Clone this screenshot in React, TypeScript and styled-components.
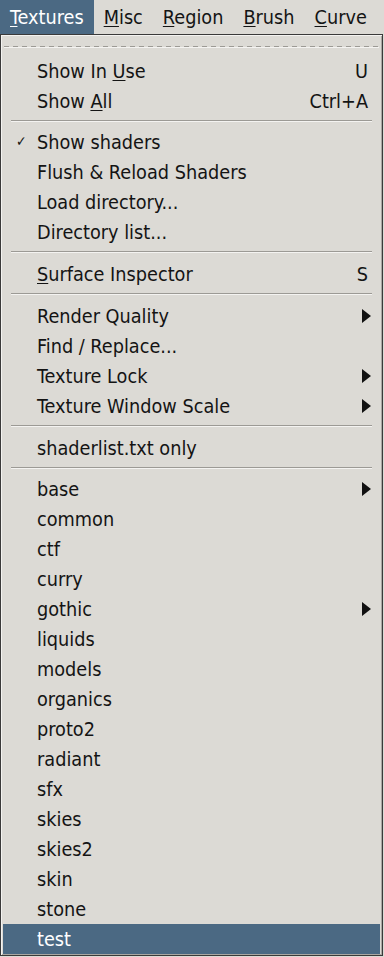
import React from 'react';
import styled, { createGlobalStyle } from 'styled-components';

const GlobalStyle = createGlobalStyle`
  html, body {
    margin: 0;
    padding: 0;
    background: #dcdad5;
  }
  body {
    font-family: "DejaVu Sans Condensed", "DejaVu Sans", sans-serif;
    font-stretch: condensed;
    font-size: 19.7px;
    color: #141414;
  }
`;

const Screen = styled.div`
  width: 384px;
  height: 957px;
  overflow: hidden;
  background: #dcdad5;
`;

const MenuBar = styled.div`
  display: flex;
  height: 34px;
  overflow: hidden;
`;

const BarItem = styled.div<{ active?: boolean }>`
  display: flex;
  align-items: center;
  padding: 0 10px;
  background: ${p => (p.active ? '#4b6983' : 'transparent')};
  color: ${p => (p.active ? '#ffffff' : '#141414')};
  white-space: nowrap;
`;

const Mnemonic = styled.span`
  text-decoration: underline;
  text-underline-offset: 2px;
`;

const Menu = styled.div`
  width: 377px;
  border: 1px solid #3a3a3a;
  box-shadow: inset 1px 1px 0 #f4f3f1, inset -1px -1px 0 #a9a7a2;
  background: #dcdad5;
  padding: 1px 2px;
`;

const TearOff = styled.div`
  height: 20px;
  display: flex;
  align-items: center;
  padding: 0 1px;
`;

const Dashes = styled.div`
  flex: 1;
  height: 1px;
  background: repeating-linear-gradient(
    to right,
    #9c9a95 0 5px,
    transparent 5px 9px
  );
  box-shadow: 0 1px 0 #f4f3f1;
`;

const Item = styled.div<{ selected?: boolean }>`
  display: flex;
  align-items: center;
  height: 30px;
  padding: 0 10px 0 34px;
  position: relative;
  background: ${p => (p.selected ? '#4b6983' : 'transparent')};
  color: ${p => (p.selected ? '#ffffff' : '#141414')};
  white-space: nowrap;
`;

const Label = styled.span`
  flex: 1;
`;

const Accel = styled.span`
  margin-right: 2px;
`;

const Check = styled.span`
  position: absolute;
  left: 13px;
  top: 6px;
  font-size: 14px;
`;

const Arrow = styled.span`
  width: 0;
  height: 0;
  border-top: 7px solid transparent;
  border-bottom: 7px solid transparent;
  border-left: 9px solid #111;
  margin-right: -1px;
`;

const Separator = styled.div<{ tight?: boolean }>`
  height: ${p => (p.tight ? 11 : 12)}px;
  box-sizing: border-box;
  padding: 4px 8px 0;
  &::after {
    content: '';
    display: block;
    height: 1px;
    background: #9c9a95;
    box-shadow: 0 1px 0 #f4f3f1;
  }
`;

type Entry =
  | { sep: true; tight?: boolean }
  | {
      label: React.ReactNode;
      accel?: string;
      sub?: boolean;
      check?: boolean;
      selected?: boolean;
    };

const entries: Entry[] = [
  { label: <>Show In <Mnemonic>U</Mnemonic>se</>, accel: 'U' },
  { label: <>Show <Mnemonic>A</Mnemonic>ll</>, accel: 'Ctrl+A' },
  { sep: true, tight: true },
  { label: 'Show shaders', check: true },
  { label: 'Flush & Reload Shaders' },
  { label: 'Load directory...' },
  { label: 'Directory list...' },
  { sep: true },
  { label: <><Mnemonic>S</Mnemonic>urface Inspector</>, accel: 'S' },
  { sep: true },
  { label: 'Render Quality', sub: true },
  { label: 'Find / Replace...' },
  { label: 'Texture Lock', sub: true },
  { label: 'Texture Window Scale', sub: true },
  { sep: true },
  { label: 'shaderlist.txt only' },
  { sep: true, tight: true },
  { label: 'base', sub: true },
  { label: 'common' },
  { label: 'ctf' },
  { label: 'curry' },
  { label: 'gothic', sub: true },
  { label: 'liquids' },
  { label: 'models' },
  { label: 'organics' },
  { label: 'proto2' },
  { label: 'radiant' },
  { label: 'sfx' },
  { label: 'skies' },
  { label: 'skies2' },
  { label: 'skin' },
  { label: 'stone' },
  { label: 'test', selected: true },
];

export default function App() {
  return (
    <Screen>
      <GlobalStyle />
      <MenuBar>
        <BarItem active><span><Mnemonic>T</Mnemonic>extures</span></BarItem>
        <BarItem><span><Mnemonic>M</Mnemonic>isc</span></BarItem>
        <BarItem><span><Mnemonic>R</Mnemonic>egion</span></BarItem>
        <BarItem><span><Mnemonic>B</Mnemonic>rush</span></BarItem>
        <BarItem><span><Mnemonic>C</Mnemonic>urve</span></BarItem>
        <BarItem><span><Mnemonic>P</Mnemonic>lugins</span></BarItem>
      </MenuBar>
      <Menu>
        <TearOff><Dashes /></TearOff>
        {entries.map((e, i) =>
          'sep' in e ? (
            <Separator key={i} tight={e.tight} />
          ) : (
            <Item key={i} selected={e.selected}>
              {e.check && <Check>✓</Check>}
              <Label>{e.label}</Label>
              {e.accel && <Accel>{e.accel}</Accel>}
              {e.sub && <Arrow />}
            </Item>
          )
        )}
      </Menu>
    </Screen>
  );
}
